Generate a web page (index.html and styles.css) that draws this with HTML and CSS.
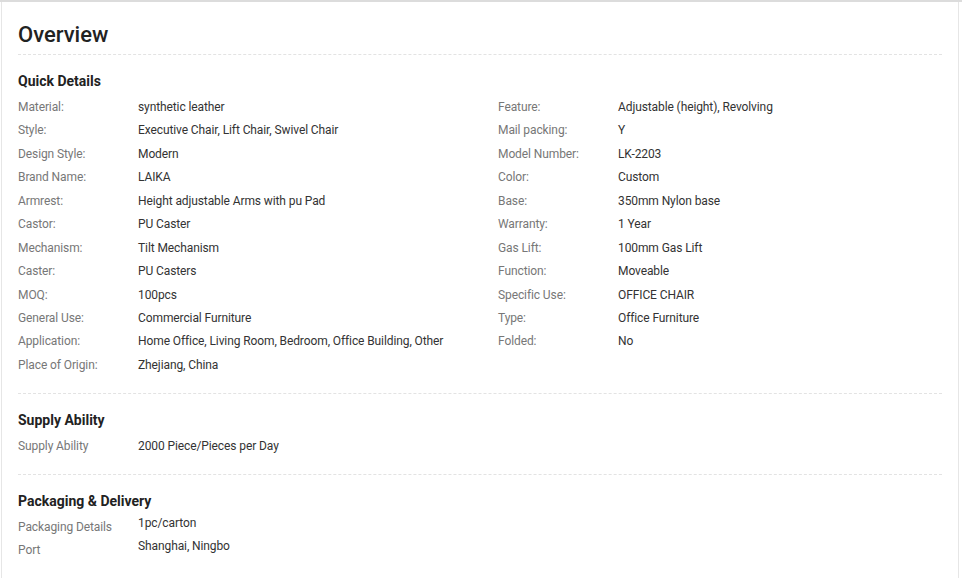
FILE: index.html
```html
<!DOCTYPE html>
<html>
<head>
<meta charset="utf-8">
<link rel="stylesheet" href="styles.css">
</head>
<body>
<div class="page">
  <div class="card">
    <h1 class="title">Overview</h1>

    <section class="section">
      <h2 class="sec-title">Quick Details</h2>
      <div class="cols">
        <div class="col col-left">
          <div class="row"><span class="lbl">Material:</span><span class="val">synthetic leather</span></div>
          <div class="row"><span class="lbl">Style:</span><span class="val">Executive Chair, Lift Chair, Swivel Chair</span></div>
          <div class="row"><span class="lbl">Design Style:</span><span class="val">Modern</span></div>
          <div class="row"><span class="lbl">Brand Name:</span><span class="val">LAIKA</span></div>
          <div class="row"><span class="lbl">Armrest:</span><span class="val">Height adjustable Arms with pu Pad</span></div>
          <div class="row"><span class="lbl">Castor:</span><span class="val">PU Caster</span></div>
          <div class="row"><span class="lbl">Mechanism:</span><span class="val">Tilt Mechanism</span></div>
          <div class="row"><span class="lbl">Caster:</span><span class="val">PU Casters</span></div>
          <div class="row"><span class="lbl">MOQ:</span><span class="val">100pcs</span></div>
          <div class="row"><span class="lbl">General Use:</span><span class="val">Commercial Furniture</span></div>
          <div class="row"><span class="lbl">Application:</span><span class="val">Home Office, Living Room, Bedroom, Office Building, Other</span></div>
          <div class="row"><span class="lbl">Place of Origin:</span><span class="val">Zhejiang, China</span></div>
        </div>
        <div class="col col-right">
          <div class="row"><span class="lbl">Feature:</span><span class="val">Adjustable (height), Revolving</span></div>
          <div class="row"><span class="lbl">Mail packing:</span><span class="val">Y</span></div>
          <div class="row"><span class="lbl">Model Number:</span><span class="val">LK-2203</span></div>
          <div class="row"><span class="lbl">Color:</span><span class="val">Custom</span></div>
          <div class="row"><span class="lbl">Base:</span><span class="val">350mm Nylon base</span></div>
          <div class="row"><span class="lbl">Warranty:</span><span class="val">1 Year</span></div>
          <div class="row"><span class="lbl">Gas Lift:</span><span class="val">100mm Gas Lift</span></div>
          <div class="row"><span class="lbl">Function:</span><span class="val">Moveable</span></div>
          <div class="row"><span class="lbl">Specific Use:</span><span class="val">OFFICE CHAIR</span></div>
          <div class="row"><span class="lbl">Type:</span><span class="val">Office Furniture</span></div>
          <div class="row"><span class="lbl">Folded:</span><span class="val">No</span></div>
        </div>
      </div>
    </section>

    <section class="section">
      <h2 class="sec-title">Supply Ability</h2>
      <div class="row"><span class="lbl">Supply Ability</span><span class="val">2000 Piece/Pieces per Day</span></div>
    </section>

    <section class="section last">
      <h2 class="sec-title">Packaging &amp; Delivery</h2>
      <div class="row shifted"><span class="lbl">Packaging Details</span><span class="val">1pc/carton</span></div>
      <div class="row shifted"><span class="lbl">Port</span><span class="val">Shanghai, Ningbo</span></div>
    </section>
  </div>
</div>
</body>
</html>
```

FILE: styles.css
```css
html, body {
  margin: 0;
  padding: 0;
  background: #ffffff;
}

.page {
  border-top: 2px solid #dcdcdc;
  font-family: Roboto, "Liberation Sans", Arial, sans-serif;
}

.card {
  margin-left: 1px;
  width: 958px;
  min-height: 576px;
  box-sizing: border-box;
  border-left: 1px solid #e6e6e6;
  border-right: 1px solid #e6e6e6;
  padding: 20px 16px 0 16px;
}

.title {
  margin: 0;
  font-size: 22px;
  line-height: 26px;
  font-weight: 500;
  color: #222;
  padding-bottom: 6px;
  border-bottom: 1px dashed #e3e3e3;
}

.section {
  padding-top: 16px;
  padding-bottom: 15.5px;
  border-bottom: 1px dashed #e3e3e3;
}

.section.last {
  border-bottom: none;
}

.sec-title {
  margin: 0 0 5px 0;
  font-size: 14px;
  line-height: 20px;
  font-weight: 700;
  color: #222;
}

.cols {
  display: flex;
}

.col-left {
  width: 480px;
}

.col-right {
  flex: 1;
}

.row {
  display: flex;
  height: 23.45px;
  font-size: 12px;
  line-height: 23.45px;
  letter-spacing: -0.1px;
}

.lbl {
  width: 120px;
  flex: none;
  color: #777;
}

.val {
  color: #333;
}

.row.shifted {
  height: 23px;
  line-height: 23px;
}

.row.shifted .val {
  margin-top: -4px;
}
```
